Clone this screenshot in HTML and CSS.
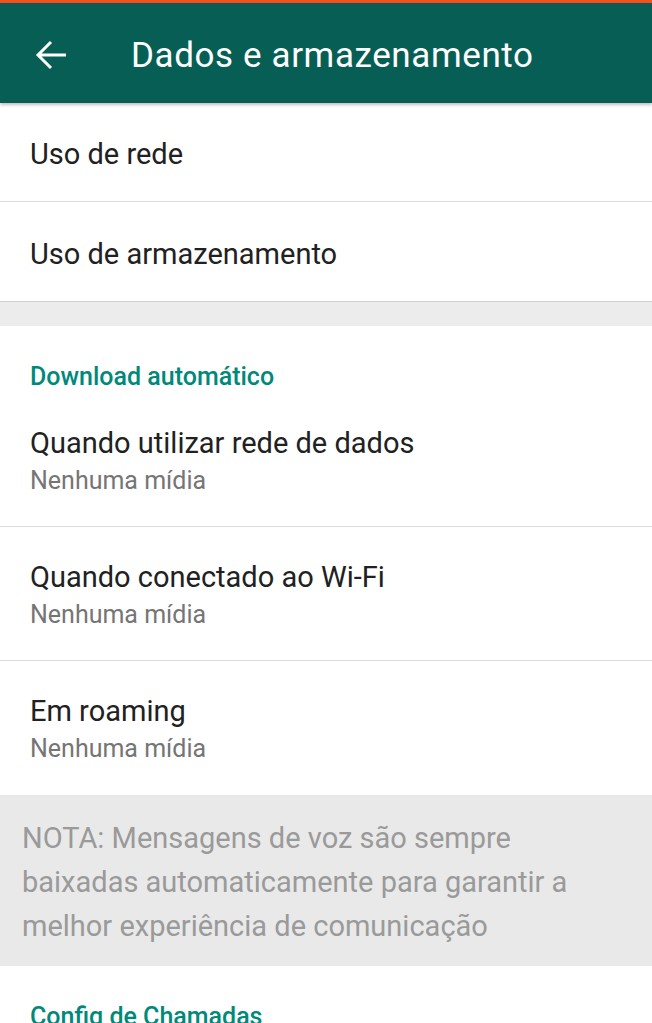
FILE: index.html
```html
<!DOCTYPE html>
<html lang="pt">
<head>
<meta charset="utf-8">
<link rel="stylesheet" href="styles.css">
</head>
<body>
<div class="statusbar"></div>
<header class="toolbar">
  <svg class="back" width="32" height="32" viewBox="0 0 32 32"><path d="M31 16H3M16 3L3 16l13 13" fill="none" stroke="#fff" stroke-width="3"/></svg>
  <h1 class="title">Dados e armazenamento</h1>
</header>
<section class="group">
  <div class="row single">Uso de rede</div>
  <div class="row single last">Uso de armazenamento</div>
</section>
<div class="spacer"></div>
<section class="group">
  <div class="header">Download automático</div>
  <div class="row double">
    <div class="primary">Quando utilizar rede de dados</div>
    <div class="secondary">Nenhuma mídia</div>
  </div>
  <div class="row double">
    <div class="primary">Quando conectado ao Wi-Fi</div>
    <div class="secondary">Nenhuma mídia</div>
  </div>
  <div class="row double noborder">
    <div class="primary">Em roaming</div>
    <div class="secondary">Nenhuma mídia</div>
  </div>
</section>
<div class="note">NOTA: Mensagens de voz são sempre baixadas automaticamente para garantir a melhor experiência de comunicação</div>
<section class="group">
  <div class="header">Config de Chamadas</div>
</section>
</body>
</html>
```
FILE: styles.css
```css
html, body {
  margin: 0;
  padding: 0;
  background: #ffffff;
  font-family: Roboto, "Noto Sans", sans-serif;
  overflow: hidden;
}
.statusbar {
  height: 3px;
  background: #f4511e;
}
.toolbar {
  height: 100px;
  background: #075e54;
  display: flex;
  align-items: center;
  box-shadow: 0 2px 3px rgba(0,0,0,0.25);
  position: relative;
  z-index: 2;
}
.back {
  margin-left: 35px;
  margin-top: 4px;
  flex: none;
}
.title {
  margin: 4px 0 0 64px;
  color: #ffffff;
  font-size: 35px;
  font-weight: 400;
  letter-spacing: 0.6px;
}
.group {
  background: #fff;
}
.row {
  padding-left: 30px;
  border-bottom: 1px solid #dcdcdc;
  color: #212121;
}
.row.single {
  height: 99px;
  box-sizing: border-box;
  padding-top: 4px;
  display: flex;
  align-items: center;
  font-size: 29px;
}
.row.single.last {
  height: 100px;
  border-bottom: 1px solid #d0d0d0;
}
.spacer {
  height: 24px;
  background: #ececec;
}
.header {
  padding: 36px 0 1px 30px;
  line-height: 30px;
  color: #00897b;
  font-size: 25px;
  font-weight: 500;
}
.row.double {
  height: 134px;
  box-sizing: border-box;
  padding-top: 32px;
}
.row.double.noborder {
  border-bottom: none;
}
.primary {
  font-size: 29px;
  line-height: 36px;
}
.secondary {
  font-size: 25px;
  line-height: 40px;
  color: #757575;
}
.note {
  background: #e9e9e9;
  color: #9a9a9a;
  font-size: 29px;
  line-height: 44px;
  padding: 21px 40px 18px 22px;
}
```
